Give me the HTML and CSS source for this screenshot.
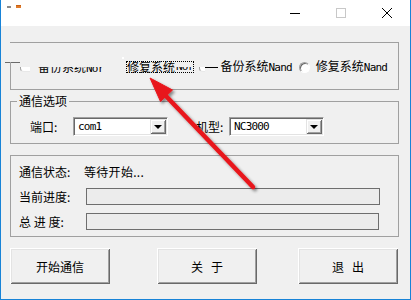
FILE: index.html
```html
<!DOCTYPE html>
<html lang="zh-CN">
<head>
    <meta charset="UTF-8">
    <title>刷机工具</title>
    <link rel="stylesheet" href="styles.css">
</head>
<body>
    <div class="window">
        <div class="titlebar">
            <div class="app-icon"><span class="ico-gray"></span><span class="ico-orange"></span></div>
            <div class="caption-btns">
                <span class="cap-btn">
                    <svg width="10" height="10" viewBox="0 0 10 10"><path d="M0 5.5H10" stroke="#000" stroke-width="1"/></svg>
                </span>
                <span class="cap-btn">
                    <svg width="10" height="10" viewBox="0 0 10 10"><rect x="0.5" y="0.5" width="9" height="9" fill="none" stroke="#c8c8c8"/></svg>
                </span>
                <span class="cap-btn">
                    <svg width="10" height="10" viewBox="0 0 10 10"><path d="M0 0L10 10M10 0L0 10" stroke="#000" stroke-width="1"/></svg>
                </span>
            </div>
        </div>

        <div class="client">
            <!-- mode selection, partly repainted -->
            <div class="group mode-group">
                <span class="corner-top"></span>
                <span class="corner-left"></span>
                <span class="stray-dot"></span>
                <div class="radio-row">
                    <span class="radio-stub"></span>
                    <span class="clipped-text"><span>备份系统<span class="mono">Nor</span></span></span>
                    <span class="focus-label">修复系统<span class="clipped-mono"><span class="mono">Nor</span></span></span>
                    <span class="radio-stub right-stub"></span>
                    <span class="dash"></span>
                    <span class="radio-text">备份系统<span class="mono">Nand</span></span>
                    <span class="radio"></span>
                    <span class="radio-text">修复系统<span class="mono">Nand</span></span>
                </div>
            </div>

            <fieldset class="group options-group">
                <legend>通信选项</legend>
                <div class="field-row">
                    <label class="port-label">端口:</label>
                    <div class="combo"><span class="combo-value mono">com1</span><span class="drop-btn"></span></div>
                    <label class="model-label">机型:</label>
                    <div class="combo"><span class="combo-value mono">NC3000</span><span class="drop-btn"></span></div>
                </div>
            </fieldset>

            <div class="group status-group">
                <div class="status-row">
                    <span class="row-label">通信状态:</span>
                    <span class="status-value">等待开始...</span>
                </div>
                <div class="status-row">
                    <span class="row-label">当前进度:</span>
                    <div class="progress"></div>
                </div>
                <div class="status-row">
                    <span class="row-label">总 进 度:</span>
                    <div class="progress short"></div>
                </div>
            </div>

            <div class="button-row">
                <button class="win-btn">开始通信</button>
                <button class="win-btn about-btn">关&nbsp;&nbsp;&nbsp;于</button>
                <button class="win-btn exit-btn">退&nbsp;&nbsp;&nbsp;出</button>
            </div>
        </div>

        <!-- annotation arrow -->
        <svg class="arrow" width="411" height="300" viewBox="0 0 411 300">
            <defs>
                <filter id="shadow" x="-20%" y="-20%" width="140%" height="140%">
                    <feDropShadow dx="2" dy="2" stdDeviation="1.6" flood-color="#000" flood-opacity="0.45"/>
                </filter>
            </defs>
            <g filter="url(#shadow)" fill="#e8161b" stroke="#e8161b">
                <path d="M253 187L165 95" stroke-width="4.5" stroke-linecap="round" fill="none"/>
                <path d="M150 78L160.5 101.5L172.5 90Z" stroke-width="1" stroke-linejoin="round"/>
            </g>
        </svg>
    </div>
</body>
</html>
```

FILE: styles.css
```css
body {
    margin: 0;
    background: #f0f0f0;
    font-family: "Noto Sans CJK SC", "Noto Sans", sans-serif;
    font-size: 12px;
    color: #000;
}

.window {
    position: relative;
    width: 411px;
    height: 300px;
    box-sizing: border-box;
    border: 1px solid #1883d7;
    border-top: none;
    background: #f0f0f0;
    overflow: hidden;
}

.titlebar {
    height: 26px;
    background: #fff;
    display: flex;
    justify-content: space-between;
}

.app-icon {
    display: flex;
    gap: 5px;
    padding: 5px 0 0 6px;
}

.ico-gray {
    width: 4px;
    height: 2px;
    background: #8a8a8a;
    margin-top: 1px;
}

.ico-orange {
    width: 5px;
    height: 2px;
    background: #e07a2a;
    border-top: 1px solid #c86010;
}

.caption-btns {
    display: flex;
}

.cap-btn {
    width: 46px;
    height: 26px;
    display: flex;
    align-items: center;
    justify-content: center;
}

.client {
    padding: 16px 11px 0 9px;
}

.group {
    border: 1px solid #a0a0a0;
    box-sizing: border-box;
}

.mono {
    font-family: "DejaVu Sans Mono", monospace;
    font-size: 11px;
    letter-spacing: -0.8px;
}

/* mode group */
.mode-group {
    position: relative;
    height: 48px;
    border-left: none;
    padding-top: 17px;
}

.corner-top {
    position: absolute;
    left: -5px;
    top: 19px;
    width: 15px;
    border-top: 1px solid #6a6a6a;
}

.corner-left {
    position: absolute;
    left: 0;
    top: 19px;
    height: 27px;
    border-left: 1px solid #a0a0a0;
}

.stray-dot {
    position: absolute;
    left: 112px;
    top: 14px;
    width: 2px;
    height: 2px;
    background: #fff;
}

.radio-row {
    display: flex;
    align-items: center;
    height: 14px;
    line-height: 14px;
    white-space: nowrap;
}

.radio-stub {
    width: 9px;
    height: 4px;
    margin-left: 10px;
    margin-top: 4px;
    background: #fff;
    border-left: 1px solid #a0a0a0;
    border-bottom: 1px solid #e8e8e8;
    border-bottom-left-radius: 4px;
}

.clipped-text {
    margin-left: 8px;
    width: 66px;
    height: 7px;
    margin-top: 7px;
    overflow: hidden;
    display: block;
    line-height: 14px;
}

.clipped-text > span {
    display: block;
    margin-top: -7px;
}

.focus-label {
    margin-left: 22px;
    padding: 0 1px;
    display: flex;
    align-items: flex-end;
    outline: 1px dotted #000;
    outline-offset: -1px;
    height: 12px;
    line-height: 12px;
}

.clipped-mono {
    height: 6px;
    overflow: hidden;
    display: block;
    line-height: 12px;
    margin-left: 1px;
}

.clipped-mono > span {
    display: block;
    margin-top: -6px;
}

.right-stub {
    width: 5px;
    margin-left: 5px;
}

.dash {
    width: 13px;
    height: 1px;
    background: #000;
    margin-top: 1px;
}

.radio-text {
    margin-left: 2px;
}

.radio {
    width: 11px;
    height: 11px;
    box-sizing: border-box;
    margin-left: 7px;
    margin-right: 4px;
    border-radius: 50%;
    background: #fff;
    border: 1px solid;
    border-color: #a0a0a0 #fff #fff #a0a0a0;
    box-shadow: inset 1px 1px 0 #696969;
}

/* options group */
.options-group {
    margin: 4px 0 0;
    padding: 0 0 7px 19px;
    min-width: 0;
}

.options-group legend {
    margin-left: -13px;
    padding: 0 2px;
    line-height: 14px;
}

.field-row {
    display: flex;
    align-items: center;
    margin-top: 9px;
}

.port-label {
    width: 43px;
}

.model-label {
    width: 33px;
    margin-left: 28px;
}

.combo {
    width: 95px;
    height: 19px;
    box-sizing: border-box;
    background: #fff;
    border: 1px solid;
    border-color: #a0a0a0 #fff #fff #a0a0a0;
    box-shadow: inset 1px 1px 0 #696969, inset -1px -1px 0 #e3e3e3;
    display: flex;
    align-items: center;
    justify-content: space-between;
    padding: 1px 1px 1px 4px;
}

.combo-value {
    font-size: 11px;
}

.drop-btn {
    position: relative;
    width: 16px;
    height: 15px;
    box-sizing: border-box;
    background: #f0f0f0;
    box-shadow: inset 1px 1px 0 #e3e3e3, inset -1px -1px 0 #696969, inset 2px 2px 0 #fff, inset -2px -2px 0 #a0a0a0;
}

.drop-btn::after {
    content: "";
    position: absolute;
    left: 4px;
    top: 6px;
    border-left: 4px solid transparent;
    border-right: 4px solid transparent;
    border-top: 4px solid #000;
}

/* status group */
.status-group {
    margin-top: 11px;
    padding: 7px 0 6px 8px;
    display: grid;
    grid-template-rows: 17px 17px 17px;
    row-gap: 8px;
}

.status-row {
    display: flex;
    align-items: center;
}

.row-label {
    width: 67px;
}

.status-value {
    margin-left: -2px;
    letter-spacing: 0.3px;
}

.progress {
    width: 294px;
    height: 17px;
    box-sizing: border-box;
    border: 1px solid #6e6e6e;
    background: #ececec;
}

.progress.short {
    width: 293px;
}

/* buttons */
.button-row {
    display: flex;
    margin-top: 11px;
}

.win-btn {
    width: 100px;
    height: 36px;
    border: none;
    background: #f0f0f0;
    font-family: "Noto Sans CJK SC", "Noto Sans", sans-serif;
    font-size: 12px;
    color: #000;
    padding: 0;
    box-shadow: inset 1px 1px 0 #fff, inset -1px -1px 0 #696969, inset 2px 2px 0 #e3e3e3, inset -2px -2px 0 #a0a0a0;
}

.about-btn {
    margin-left: 47px;
}

.exit-btn {
    margin-left: 41px;
}

.arrow {
    position: absolute;
    left: -1px;
    top: 0;
    pointer-events: none;
}
```
